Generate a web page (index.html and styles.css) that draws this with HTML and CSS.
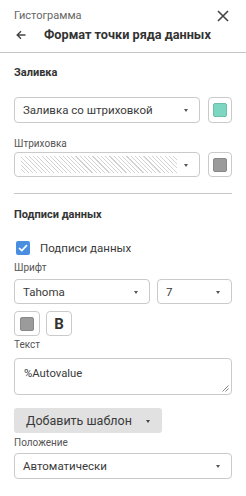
FILE: index.html
```html
<!DOCTYPE html>
<html>
<head>
<meta charset="utf-8">
<link rel="stylesheet" href="styles.css">
</head>
<body>
<div class="panel">
  <div class="header">
    <div class="topline">
      <span class="crumb">Гистограмма</span>
      <svg class="close" width="12" height="12" viewBox="0 0 12 12"><path d="M1 1L11 11M11 1L1 11" stroke="#444" stroke-width="1.6" fill="none"/></svg>
    </div>
    <div class="titleline">
      <svg class="back" width="10" height="10" viewBox="0 0 10 10"><path d="M9.5 5H1.2M5 1.2L1.2 5L5 8.8" stroke="#444" stroke-width="1.4" fill="none"/></svg>
      <span class="title">Формат точки ряда данных</span>
    </div>
  </div>

  <div class="section">
    <div class="heading">Заливка</div>
    <div class="row r-fill">
      <div class="select grow"><span>Заливка со штриховкой</span><i class="caret"></i></div>
      <div class="swbtn"><span class="sw teal"></span></div>
    </div>
    <div class="label l-hatch">Штриховка</div>
    <div class="row r-hatch">
      <div class="select grow"><span class="hatch"></span><i class="caret"></i></div>
      <div class="swbtn"><span class="sw gray"></span></div>
    </div>
    <div class="rule"></div>
  </div>

  <div class="section s2">
    <div class="heading">Подписи данных</div>
    <div class="check">
      <span class="box"><svg width="10" height="8" viewBox="0 0 10 8"><path d="M1 4L3.8 6.6L9 1.2" stroke="#fff" stroke-width="1.7" fill="none"/></svg></span>
      <span>Подписи данных</span>
    </div>
    <div class="label l-font">Шрифт</div>
    <div class="row r-font">
      <div class="select fontname"><span>Tahoma</span><i class="caret"></i></div>
      <div class="select fontsize"><span>7</span><i class="caret"></i></div>
    </div>
    <div class="row r-btns">
      <div class="sqbtn"><span class="sw gray"></span></div>
      <div class="sqbtn bold">B</div>
    </div>
    <div class="label l-text">Текст</div>
    <div class="textarea">%Autovalue
      <svg class="grip" width="8" height="8" viewBox="0 0 8 8"><path d="M7.5 1.5L1.5 7.5M7.5 4.5L4.5 7.5" stroke="#777" stroke-width="0.9"/></svg>
    </div>
    <div class="addbtn"><span>Добавить шаблон</span><i class="caret"></i></div>
    <div class="label l-pos">Положение</div>
    <div class="select pos"><span>Автоматически</span><i class="caret"></i></div>
  </div>
</div>
</body>
</html>
```
FILE: styles.css
```css
html, body {
  margin: 0;
  padding: 0;
  background: #fff;
}
body {
  font-family: Roboto, "Noto Sans", "Liberation Sans", sans-serif;
  color: #3a3a3a;
}
.panel {
  width: 246px;
  height: 496px;
  overflow: hidden;
}
.header {
  height: 53px;
  box-sizing: border-box;
  border-bottom: 1px solid #c6c6c6;
  padding: 9px 14px 0 14px;
}
.topline {
  display: flex;
  justify-content: space-between;
  align-items: center;
  height: 14px;
}
.crumb {
  font-size: 11px;
  line-height: 14px;
  color: #666;
}
.close {
  margin-right: 3px;
}
.titleline {
  display: flex;
  align-items: center;
  height: 18px;
  margin-top: 3px;
}
.back {
  margin-left: 2px;
  margin-right: 18px;
}
.title {
  font-size: 12.7px;
  font-weight: 700;
  color: #333;
  line-height: 18px;
}
.section {
  padding: 12px 14px 0 14px;
}
.heading {
  font-size: 11px;
  font-weight: 700;
  line-height: 16px;
  color: #333;
}
.row {
  display: flex;
  gap: 8px;
}
.r-fill {
  margin-top: 16px;
}
.select {
  position: relative;
  box-sizing: border-box;
  height: 26px;
  border: 1px solid #cacaca;
  border-radius: 4px;
  display: flex;
  align-items: center;
  padding-left: 8px;
  font-size: 11.5px;
  color: #3a3a3a;
}
.grow {
  flex: 1;
}
.caret {
  position: absolute;
  right: 11px;
  top: 50%;
  margin-top: -1px;
  width: 0;
  height: 0;
  border-left: 2.5px solid transparent;
  border-right: 2.5px solid transparent;
  border-top: 3px solid #555;
}
.swbtn, .sqbtn {
  box-sizing: border-box;
  width: 24px;
  height: 26px;
  border: 1px solid #cacaca;
  border-radius: 4px;
  display: flex;
  align-items: center;
  justify-content: center;
}
.sw {
  width: 14px;
  height: 14px;
  border-radius: 2px;
}
.teal {
  background: #7dd6c1;
  border: 1px solid #6cbfab;
  box-sizing: border-box;
}
.gray {
  background: #9b9b9b;
  border: 1px solid #888;
  box-sizing: border-box;
}
.label {
  font-size: 10px;
  line-height: 12px;
  color: #555;
}
.l-hatch {
  margin-top: 15px;
}
.r-hatch {
  margin-top: 2px;
}
.r-hatch .select {
  height: 25px;
  padding-left: 6px;
}
.r-hatch .swbtn {
  height: 25px;
}
.hatch {
  display: block;
  width: 156px;
  height: 17px;
  background: repeating-linear-gradient(45deg, #ffffff 0px, #ffffff 2.2px, #d2d2d2 2.2px, #d2d2d2 3px);
}
.rule {
  margin-top: 16px;
  height: 1px;
  background: #c6c6c6;
}
.s2 {
  padding-top: 13px;
}
.check {
  display: flex;
  align-items: center;
  margin-top: 16px;
  height: 18px;
  font-size: 11.5px;
  color: #3a3a3a;
}
.box {
  width: 14px;
  height: 14px;
  border-radius: 2px;
  background: #4a8ee0;
  display: flex;
  align-items: center;
  justify-content: center;
  margin-left: 2px;
  margin-right: 10px;
}
.l-font {
  margin-top: 5px;
}
.r-font {
  margin-top: 5px;
  gap: 7px;
}
.r-font .select {
  height: 25px;
}
.fontname {
  width: 136px;
}
.fontsize {
  flex: 1;
}
.r-btns {
  margin-top: 7px;
  gap: 6px;
}
.sqbtn {
  width: 26px;
  height: 25px;
}
.bold {
  font-weight: 700;
  font-size: 15px;
  color: #333;
}
.l-text {
  margin-top: 3px;
}
.textarea {
  position: relative;
  box-sizing: border-box;
  margin-top: 7px;
  height: 37px;
  border: 1px solid #cacaca;
  border-radius: 4px;
  padding: 8px 0 0 9px;
  font-size: 11.3px;
  line-height: 14px;
  color: #3a3a3a;
}
.grip {
  position: absolute;
  right: 2px;
  bottom: 2px;
}
.addbtn {
  position: relative;
  box-sizing: border-box;
  margin-top: 13px;
  width: 148px;
  height: 25px;
  background: #e1e1e1;
  border-radius: 3px;
  display: flex;
  align-items: center;
  padding-left: 12px;
  font-size: 12.5px;
  color: #3a3a3a;
}
.addbtn .caret {
  right: 12px;
  border-top-color: #444;
}
.l-pos {
  margin-top: 4px;
}
.pos {
  margin-top: 4px;
}
```
